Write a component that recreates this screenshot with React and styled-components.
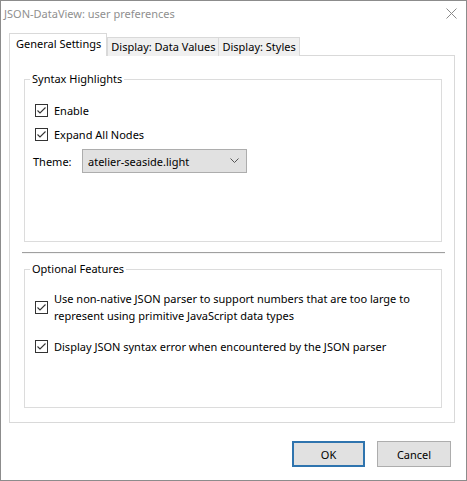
import React from 'react'
import styled, { createGlobalStyle, css } from 'styled-components'

const GlobalStyle = createGlobalStyle`
  html, body {
    margin: 0;
    padding: 0;
    background: #ffffff;
  }
  body {
    font-family: "Noto Sans", "Open Sans", Arial, sans-serif;
    font-size: 11px;
    color: #000;
  }
`

const Window = styled.div`
  width: 467px;
  height: 481px;
  box-sizing: border-box;
  border: 1px solid #8c8c8c;
  background: #fff;
  display: flex;
  flex-direction: column;
`

const TitleBar = styled.div`
  height: 26px;
  display: flex;
  align-items: center;
  justify-content: space-between;
  padding: 0 9px 0 3px;
  flex-shrink: 0;
`

const Title = styled.span`
  color: #8f8f8f;
  font-size: 11px;
  line-height: 16px;
  margin-top: -1px;
`

const CloseIcon = styled.svg`
  width: 11px;
  height: 11px;
  margin-top: -1px;
`

const Body = styled.div`
  padding: 0 0 0 8px;
  display: flex;
  flex-direction: column;
`

const TabStrip = styled.div`
  display: flex;
  align-items: flex-end;
  height: 29px;
  position: relative;
  z-index: 1;
  margin-bottom: -1px;
`

const Tab = styled.div`
  box-sizing: border-box;
  border: 1px solid #d9d9d9;
  border-bottom: none;
  background: #f0f0f0;
  height: 19px;
  line-height: 17px;
  padding: 0 3px 0 3px;
  margin-left: -1px;
  white-space: nowrap;

  ${props => props.active && css`
    background: #fff;
    height: 23px;
    line-height: 20px;
    padding: 0 5px 0 6px;
    margin-left: 0;
    margin-right: 1px;
  `}
`

const TabPanel = styled.div`
  width: 446px;
  height: 368px;
  box-sizing: border-box;
  border: 1px solid #d9d9d9;
  padding: 15px 12px 0 14px;
  display: flex;
  flex-direction: column;
`

const GroupBox = styled.fieldset`
  margin: 0;
  padding: 0;
  width: 418px;
  height: ${props => props.h}px;
  box-sizing: border-box;
  border: 1px solid #dcdcdc;
  min-inline-size: 0;
`

const Legend = styled.legend`
  margin-left: 5px;
  padding: 0 2px;
  line-height: 16px;
  font-size: 11px;
  color: #000;
`

const GroupContent = styled.div`
  padding: ${props => props.pt}px 10px 0 10px;
  display: flex;
  flex-direction: column;
`

const Row = styled.label`
  display: flex;
  align-items: center;
  gap: 6px;
  min-height: 24px;
  margin-top: ${props => props.mt || 0}px;
  line-height: 17px;
  white-space: nowrap;
`

const Box = styled.span`
  width: 13px;
  height: 13px;
  box-sizing: border-box;
  border: 1px solid #333;
  background: #fff;
  flex-shrink: 0;
  display: flex;
  align-items: center;
  justify-content: center;
`

const ThemeRow = styled.div`
  display: flex;
  align-items: center;
  margin-top: 3px;
  height: 24px;
`

const ThemeLabel = styled.span`
  width: 49px;
  margin-left: -2px;
`

const Select = styled.div`
  width: 165px;
  height: 24px;
  box-sizing: border-box;
  border: 1px solid #adadad;
  background: #e1e1e1;
  display: flex;
  align-items: center;
  justify-content: space-between;
  padding: 0 7px 0 5px;
`

const Separator = styled.div`
  height: 0;
  border-top: 1px solid #a0a0a0;
  border-bottom: 1px solid #f4f4f4;
  margin: 10px -3px 7px -2px;
`

const Footer = styled.div`
  display: flex;
  justify-content: flex-end;
  gap: 12px;
  padding: 18px 15px 0 0;
`

const Button = styled.button`
  width: 74px;
  height: 26px;
  box-sizing: border-box;
  background: #e1e1e1;
  border: 1px solid #adadad;
  font-family: inherit;
  font-size: 11px;
  color: #000;
  padding: 0;
  border-radius: 0;

  ${props => props.primary && css`
    border: 2px solid #2f74ae;
    width: 73px;
  `}
`

const Check = () => (
  <Box>
    <svg width="11" height="11" viewBox="0 0 11 11">
      <polyline points="1.5,5.5 4,8 9.5,2.5" fill="none" stroke="#333" strokeWidth="1.1" />
    </svg>
  </Box>
)

const Option = ({ children, mt }) => (
  <Row mt={mt}>
    <Check />
    <span>{children}</span>
  </Row>
)

export default function App () {
  return (
    <>
      <GlobalStyle />
      <Window>
        <TitleBar>
          <Title>JSON-DataView: user preferences</Title>
          <CloseIcon viewBox="0 0 11 11">
            <path d="M0.5 0.5 L10.5 10.5 M10.5 0.5 L0.5 10.5" stroke="#8a8a8a" strokeWidth="1" fill="none" />
          </CloseIcon>
        </TitleBar>
        <Body>
          <TabStrip>
            <Tab active>General Settings</Tab>
            <Tab>Display: Data Values</Tab>
            <Tab>Display: Styles</Tab>
          </TabStrip>
          <TabPanel>
            <GroupBox h={171}>
              <Legend>Syntax Highlights</Legend>
              <GroupContent pt={11}>
                <Option>Enable</Option>
                <Option>Expand All Nodes</Option>
                <ThemeRow>
                  <ThemeLabel>Theme:</ThemeLabel>
                  <Select>
                    <span>atelier-seaside.light</span>
                    <svg width="9" height="6" viewBox="0 0 9 6">
                      <polyline points="0.5,0.5 4.5,4.5 8.5,0.5" fill="none" stroke="#555" strokeWidth="1" />
                    </svg>
                  </Select>
                </ThemeRow>
              </GroupContent>
            </GroupBox>
            <Separator />
            <GroupBox h={147}>
              <Legend>Optional Features</Legend>
              <GroupContent pt={13}>
                <Option>
                  Use non-native JSON parser to support numbers that are too large to
                  <br />
                  represent using primitive JavaScript data types
                </Option>
                <Option mt={10}>Display JSON syntax error when encountered by the JSON parser</Option>
              </GroupContent>
            </GroupBox>
          </TabPanel>
        </Body>
        <Footer>
          <Button primary>OK</Button>
          <Button>Cancel</Button>
        </Footer>
      </Window>
    </>
  )
}
